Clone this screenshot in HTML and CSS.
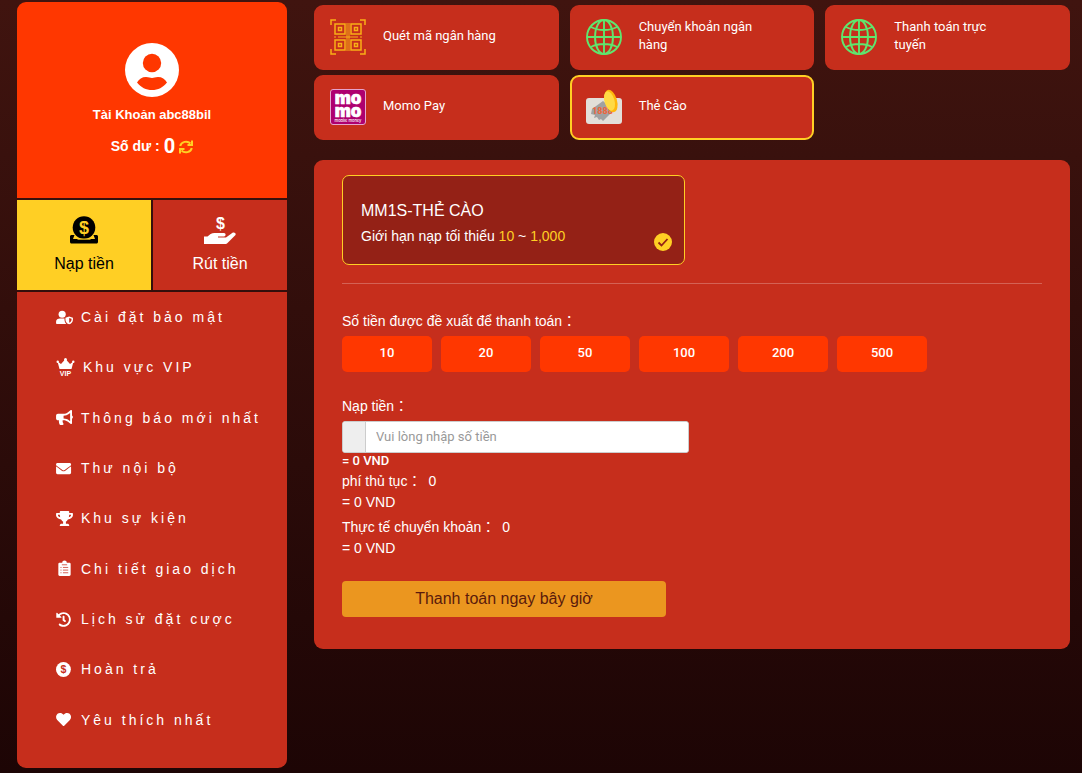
FILE: index.html
```html
<!DOCTYPE html>
<html lang="vi">
<head>
    <meta charset="UTF-8">
    <meta name="viewport" content="width=device-width, initial-scale=1">
    <title>Nạp tiền</title>
    <link rel="stylesheet" href="styles.css">
</head>
<body>
    <div class="page">
        <aside class="sidebar">
            <div class="profile">
                <svg class="avatar" viewBox="0 0 54 54">
                    <circle cx="27" cy="27" r="27" fill="#fff"/>
                    <circle cx="27" cy="20" r="9.200" fill="#ff3700"/>
                    <path d="M12 39.500C14 36 17 34 21 34c3 0 4 1 6 1s3-1 6-1c4 0 7 2 9 5.500C38 44.500 33 47 27 47s-11-2.500-15-7.500z" fill="#ff3700"/>
                </svg>
                <div class="account">Tài Khoản <span>abc88bil</span></div>
                <div class="balance">
                    <span class="balance-label">Số dư :</span>
                    <span class="balance-value">0</span>
                    <button type="button" class="refresh" aria-label="Làm mới">
                        <svg viewBox="0 0 14 14" fill="none" stroke="#ffcf24" stroke-width="2">
                            <path d="M1.200 6A6 5.500 0 0 1 11.500 3.500M12.800 8A6 5.500 0 0 1 2.500 10.500"/>
                            <path d="M13 .5V5H8.500M1 13.500V9h4.500"/>
                        </svg>
                    </button>
                </div>
            </div>
            <div class="tabs">
                <a href="#" class="tab active">
                    <svg viewBox="0 0 28 28">
                        <path d="M1.500 19h3l-1.500 4h22l-1.500-4h3c.8 0 1.500.7 1.500 1.500V26c0 .8-.7 1.500-1.500 1.500h-25C.7 27.500 0 26.800 0 26v-5.500c0-.8.7-1.500 1.500-1.500z"/>
                        <circle cx="14" cy="11.500" r="11.300"/>
                        <path d="M4 20.500l4 2.700h12l4-2.700" fill="none" stroke="#ffcf24"/>
                        <text x="14" y="18" text-anchor="middle" font-size="18" font-weight="700" fill="#ffcf24">$</text>
                    </svg>
                    <span>Nạp tiền</span>
                </a>
                <a href="#" class="tab">
                    <svg class="hand" viewBox="0 0 32 28" fill="#fff">
                        <text x="16.500" y="12.500" text-anchor="middle" font-size="16" font-weight="700">$</text>
                        <path d="M0 20.500h3.500C5.500 18.800 7.500 17 10.500 17H20c2 0 2.300 3 0 3.500h-6v1h8l6.500-4.700c1.500-1 4 .5 3 2.200L23.500 27c-.7.600-1.200 1-2.200 1H0z"/>
                    </svg>
                    <span>Rút tiền</span>
                </a>
            </div>
            <ul class="menu">
                <li><a href="#">
                    <svg viewBox="0 0 18 16">
                        <circle cx="6.500" cy="4.500" r="3.800"/>
                        <path d="M0 14.500v-2C0 10 2 9 4 9h5v1.500c0 2 1 3.500 2 4.500H1c-.6 0-1-.2-1-.5z"/>
                        <path d="M14 6.800l4 1.500v2c0 2.200-1.500 4.200-4 5-2.500-.8-4-2.800-4-5v-2zm0 1.700v5c1.500-.6 2.500-2 2.500-3.200v-.9z" fill-rule="evenodd"/>
                    </svg>
                    Cài đặt bảo mật</a></li>
                <li><a href="#">
                    <svg class="crown" viewBox="0 0 18 18">
                        <path d="M1 3.500l3.500 2.600L9 1l4.500 5.100L17 3.500 15 11H3z"/>
                        <circle cx="9" cy="1.500" r="1.500"/><circle cx="1.200" cy="3.700" r="1.200"/><circle cx="16.800" cy="3.700" r="1.200"/>
                        <text x="9" y="17.800" text-anchor="middle" font-size="7" font-weight="700">VIP</text>
                    </svg>
                    Khu vực VIP</a></li>
                <li><a href="#">
                    <svg viewBox="0 0 576 512"><path d="M576 240c0-23.630-12.950-44.040-32-55.120V32.010C544 23.260 537.020 0 512 0c-7.120 0-14.190 2.380-19.980 7.020l-85.030 68.030C364.280 109.190 310.660 128 256 128H64c-35.350 0-64 28.650-64 64v96c0 35.350 28.650 64 64 64h33.700c-1.390 10.480-2.180 21.140-2.180 32 0 39.770 9.260 77.350 25.560 110.940 5.190 10.690 16.520 17.060 28.400 17.060h74.280c26.050 0 41.690-29.840 25.900-50.560-16.400-21.520-26.150-48.360-26.150-77.440 0-11.110 1.620-21.790 4.410-32H256c54.660 0 108.280 18.810 150.980 52.950l85.030 68.030a32.023 32.023 0 0 0 19.980 7.020c24.920 0 32-22.780 32-32V295.130C563.050 284.040 576 263.630 576 240zm-96 141.420l-33.050-26.440C392.950 311.780 325.120 288 256 288v-96c69.120 0 136.950-23.780 190.950-66.980L480 98.580v282.840z"/></svg>
                    Thông báo mới nhất</a></li>
                <li><a href="#">
                    <svg viewBox="0 0 576 512"><path d="M502.300 190.800c3.900-3.100 9.700-.2 9.700 4.700V400c0 26.500-21.500 48-48 48H48c-26.500 0-48-21.500-48-48V195.600c0-5 5.700-7.800 9.700-4.700 22.400 17.400 52.100 39.500 154.100 113.600 21.100 15.400 56.700 47.800 92.200 47.600 35.700.3 72-32.800 92.300-47.600 102-74.100 131.600-96.300 154-113.700zM256 320c23.200.4 56.600-29.200 73.400-41.400 132.700-96.300 142.800-104.700 173.400-128.700 5.800-4.500 9.200-11.500 9.200-18.900v-19c0-26.500-21.500-48-48-48H48c-26.500 0-48 21.500-48 48v19c0 7.400 3.400 14.300 9.200 18.900 30.600 23.900 40.700 32.400 173.400 128.700 16.800 12.200 50.200 41.800 73.400 41.400z"/></svg>
                    Thư nội bộ</a></li>
                <li><a href="#">
                    <svg viewBox="0 0 576 512"><path d="M552 64H448V24c0-13.300-10.700-24-24-24H152c-13.300 0-24 10.700-24 24v40H24C10.700 64 0 74.700 0 88v56c0 35.700 22.500 72.400 61.900 100.700 31.500 22.700 69.800 37.100 110 41.700C203.300 338.500 240 360 240 360v72h-48c-35.300 0-64 20.700-64 56v12c0 6.600 5.400 12 12 12h296c6.600 0 12-5.400 12-12v-12c0-35.300-28.700-56-64-56h-48v-72s36.700-21.500 68.100-73.600c40.300-4.600 78.600-19 110-41.700 39.300-28.300 61.900-65 61.900-100.700V88c0-13.300-10.700-24-24-24zM99.300 192.800C74.900 175.200 64 155.600 64 144v-16h64.200c1 32.600 5.800 61.200 12.800 86.200-15.100-5.200-29.200-12.400-41.700-21.400zM512 144c0 16.100-17.700 36.100-35.300 48.800-12.500 9-26.700 16.200-41.800 21.400 7-25 11.800-53.600 12.800-86.200H512v16z"/></svg>
                    Khu sự kiện</a></li>
                <li><a href="#">
                    <svg viewBox="0 0 16 14">
                        <path d="M3.500 1.700h2.300a2.200 2.200 0 0 1 4.400 0h2.300c.8 0 1.300.5 1.300 1.300v9.700c0 .8-.5 1.300-1.300 1.300h-9c-.8 0-1.300-.5-1.300-1.300V3c0-.8.500-1.300 1.300-1.300z"/>
                        <path d="M4.200 6h1M6.500 6h5M4.200 8.500h1M6.500 8.500h5M4.200 11h1M6.500 11h5M5.500 3.500h5" stroke="#c62e1c" stroke-width=".7"/>
                    </svg>
                    Chi tiết giao dịch</a></li>
                <li><a href="#">
                    <svg viewBox="0 0 576 512"><path d="M504 255.531c.253 136.640-111.180 248.372-247.820 248.468-59.015.042-113.223-20.530-155.822-54.911-11.077-8.940-11.905-25.541-1.839-35.607l11.267-11.267c8.609-8.609 22.353-9.551 31.891-1.984C173.062 425.135 212.781 440 256 440c101.705 0 184-82.311 184-184 0-101.705-82.311-184-184-184-48.814 0-93.149 18.969-126.068 49.932l50.754 50.754c10.080 10.080 2.941 27.314-11.313 27.314H24c-8.837 0-16-7.163-16-16V38.627c0-14.254 17.234-21.393 27.314-11.314l49.372 49.372C129.209 34.136 189.552 8 256 8c136.810 0 247.747 110.780 248 247.531zm-180.912 78.784l9.823-12.630c8.138-10.463 6.253-25.542-4.210-33.679L288 256.349V152c0-13.255-10.745-24-24-24h-16c-13.255 0-24 10.745-24 24v135.651l65.409 50.874c10.463 8.137 25.541 6.253 33.679-4.210z"/></svg>
                    Lịch sử đặt cược</a></li>
                <li><a href="#">
                    <svg viewBox="0 0 16 14">
                        <circle cx="7" cy="7" r="7"/>
                        <text x="7" y="10.500" text-anchor="middle" font-size="10" font-weight="700" fill="#c62e1c">$</text>
                    </svg>
                    Hoàn trả</a></li>
                <li><a href="#">
                    <svg viewBox="0 0 576 512"><path d="M462.300 62.600C407.500 15.900 326 24.300 275.700 76.200L256 96.500l-19.700-20.300C186.100 24.300 104.500 15.900 49.700 62.600c-62.800 53.600-66.100 149.800-9.900 207.900l193.500 199.800c12.500 12.900 32.800 12.900 45.300 0l193.500-199.800c56.300-58.100 53-154.300-9.800-207.900z"/></svg>
                    Yêu thích nhất</a></li>
            </ul>
        </aside>

        <main class="content">
            <div class="methods">
                <button type="button" class="method">
                    <svg viewBox="0 0 36 36" fill="none" stroke="#f9b016" stroke-width="1.500">
                        <path d="M1 6V1h5M30 1h5v5M35 30v5h-5M6 35H1v-5"/>
                        <path d="M5 5h10v10H5zM21 5h10v10H21zM5 21h10v10H5zM21 21h10v10H21z"/>
                        <path d="M8.500 8.500h3v3h-3zM24.500 8.500h3v3h-3zM8.500 24.500h3v3h-3zM24.500 24.500h3v3h-3z"/>
                        <path d="M17 4v28M19 4v28M4 18h2M8 18h20M30 18h2" stroke-width="1"/>
                    </svg>
                    <span>Quét mã ngân hàng</span>
                </button>
                <button type="button" class="method">
                    <svg viewBox="0 0 36 36" fill="none" stroke="#5fe66e" stroke-width="1.900">
                        <circle cx="18" cy="18" r="17"/>
                        <ellipse cx="18" cy="18" rx="9" ry="17"/>
                        <path d="M18 1v34M1 18h34M5 8c7 4 19 4 26 0M5 28c7-4 19-4 26 0"/>
                    </svg>
                    <span>Chuyển khoản ngân hàng</span>
                </button>
                <button type="button" class="method">
                    <svg viewBox="0 0 36 36" fill="none" stroke="#5fe66e" stroke-width="1.900">
                        <circle cx="18" cy="18" r="17"/>
                        <ellipse cx="18" cy="18" rx="9" ry="17"/>
                        <path d="M18 1v34M1 18h34M5 8c7 4 19 4 26 0M5 28c7-4 19-4 26 0"/>
                    </svg>
                    <span>Thanh toán trực tuyến</span>
                </button>
                <button type="button" class="method">
                    <svg class="momo" viewBox="0 0 36 36" fill="#fff">
                        <rect x=".5" y=".5" width="35" height="35" rx="2.500" fill="#ae006f" stroke="#e5a3cc"/>
                        <text x="18" y="15" text-anchor="middle" font-size="17" stroke="#fff" stroke-width=".6">mo</text>
                        <text x="18" y="28" text-anchor="middle" font-size="17" stroke="#fff" stroke-width=".6">mo</text>
                        <text class="momo-sub" x="18" y="32.700" text-anchor="middle" font-size="4">mobile money</text>
                    </svg>
                    <span>Momo Pay</span>
                </button>
                <button type="button" class="method selected">
                    <svg viewBox="0 0 36 36">
                        <rect x="0" y="9" width="36" height="26" rx="3" fill="#e3dfd9"/>
                        <path d="M6 20l11-8 11 9-11 11-2-2-2 1-2-3-3 1 1-3-4-1z" fill="#a1a1a1"/>
                        <text x="16.500" y="25" text-anchor="middle" font-size="9" font-weight="700" fill="#f0643a">1888</text>
                        <ellipse cx="25" cy="12" rx="6" ry="11.500" transform="rotate(-16 25 12)" fill="#ffb70c"/>
                        <ellipse cx="23.500" cy="12" rx="5" ry="10" transform="rotate(-16 23.500 12)" fill="#ffda45"/>
                    </svg>
                    <span>Thẻ Cào</span>
                </button>
            </div>

            <form class="panel">
                <button type="button" class="channel">
                    <span class="channel-name">MM1S-THẺ CÀO</span>
                    <span class="channel-limit">Giới hạn nạp tối thiểu <b>10</b> ~ <b>1,000</b></span>
                    <svg class="check" viewBox="0 0 18 18">
                        <circle cx="9" cy="9" r="9" fill="#ffcf24"/>
                        <path d="M4.500 9.500l3 3 6-6.500" fill="none" stroke="#942116" stroke-width="1.800"/>
                    </svg>
                </button>
                <hr>
                <p class="label">Số tiền được đề xuất để thanh toán：</p>
                <div class="amounts">
                    <button type="button">10</button>
                    <button type="button">20</button>
                    <button type="button">50</button>
                    <button type="button">100</button>
                    <button type="button">200</button>
                    <button type="button">500</button>
                </div>
                <label class="label" for="amount">Nạp tiền：</label>
                <div class="input-group">
                    <span class="addon"></span>
                    <input type="text" id="amount" name="amount" placeholder="Vui lòng nhập số tiền">
                </div>
                <div class="converted">= 0 VND</div>
                <div class="line">phí thủ tục：<span class="value">0</span></div>
                <div class="line">= 0 VND</div>
                <div class="line total">Thực tế chuyển khoản：<span class="value">0</span></div>
                <div class="line">= 0 VND</div>
                <button type="submit" class="submit">Thanh toán ngay bây giờ</button>
            </form>
        </main>
    </div>
</body>
</html>
```
FILE: styles.css
```css
* {
    box-sizing: border-box;
}
body {
    margin: 0;
    min-height: 100vh;
    background: linear-gradient(#40140f, #1d0505);
    color: #fff;
    font-family: "Liberation Sans", Arial, "Noto Sans CJK TC", sans-serif;
    font-size: 14px;
}
button {
    border: none;
    padding: 0;
    color: inherit;
    font-family: inherit;
    cursor: pointer;
}
a {
    color: inherit;
    text-decoration: none;
}
svg {
    display: block;
    flex-shrink: 0;
    overflow: visible;
}
.page {
    display: flex;
    align-items: flex-start;
    gap: 27px;
    padding: 2px 12px 5px 17px;
}

/* sidebar */
.sidebar {
    display: flex;
    flex-direction: column;
    flex-shrink: 0;
    gap: 2px;
    width: 270px;
    border-radius: 9px;
    overflow: hidden;
}
.profile {
    display: flex;
    flex-direction: column;
    align-items: center;
    padding: 41px 0 39px;
    background: #ff3700;
    font-weight: bold;
}
.avatar {
    width: 54px;
    height: 54px;
}
.account {
    margin-top: 8px;
    font-size: 13px;
    line-height: 20px;
}
.balance {
    display: flex;
    align-items: center;
    gap: 4px;
    margin-top: 9px;
    line-height: 25px;
}
.balance-value {
    font-family: Roboto, sans-serif;
    font-size: 20px;
}
.refresh {
    background: none;
}
.refresh svg {
    width: 14px;
    height: 14px;
}
.tabs {
    display: grid;
    grid-template-columns: 1fr 1fr;
    gap: 2px;
}
.tab {
    display: flex;
    flex-direction: column;
    align-items: center;
    gap: 10px;
    height: 90px;
    padding-top: 16px;
    background: #c62e1c;
    font-size: 16px;
    line-height: 20px;
}
.tab svg {
    width: 28px;
    height: 28px;
}
.tab .hand {
    width: 32px;
}
.tab.active {
    background: #ffcf24;
    color: #000;
}
.menu {
    display: grid;
    grid-auto-rows: 1fr;
    min-height: 476px;
    margin: 0;
    padding: 0 0 23px 39px;
    list-style: none;
    background: #c62e1c;
}
.menu a {
    display: flex;
    align-items: center;
    gap: 8px;
    height: 100%;
    letter-spacing: 3px;
}
.menu svg {
    width: 17px;
    height: 15px;
    fill: #fff;
    letter-spacing: 0;
}
.menu .crown {
    width: 19px;
    height: 18px;
}

/* payment methods */
.content {
    flex: 1;
    min-width: 0;
    padding-top: 3px;
}
.methods {
    display: grid;
    grid-template-columns: repeat(3, 1fr);
    gap: 5px 11px;
}
.method {
    display: flex;
    align-items: center;
    gap: 17px;
    min-height: 65px;
    padding: 0 54px 1px 14px;
    border: 2px solid #c62e1c;
    border-radius: 9px;
    background: #c62e1c;
    font-family: Roboto, sans-serif;
    font-size: 13px;
    line-height: 18px;
    text-align: left;
}
.method svg {
    width: 36px;
    height: 36px;
}
.method span {
    padding-bottom: 3px;
}
.method.selected {
    border-color: #ffcf24;
}
.momo text {
    font-family: Inter, sans-serif;
    font-weight: 900;
}
.momo .momo-sub {
    font-weight: 500;
}

/* deposit form */
.panel {
    margin-top: 20px;
    padding: 15px 28px 32px;
    border-radius: 9px;
    background: #c62e1c;
}
.channel {
    position: relative;
    display: flex;
    flex-direction: column;
    gap: 5px;
    width: 343px;
    height: 90px;
    padding: 25px 18px 0;
    border: 1px solid #ffcf24;
    border-radius: 7px;
    background: #942116;
    line-height: 20px;
    text-align: left;
}
.channel-name {
    font-size: 16px;
}
.channel-limit {
    font-size: 14px;
}
.channel b {
    color: #ffcf24;
    font-weight: normal;
}
.check {
    position: absolute;
    right: 12px;
    bottom: 13px;
    width: 18px;
    height: 18px;
}
hr {
    margin: 18px 0 27px;
    border: none;
    border-top: 1px solid rgba(255, 255, 255, 0.25);
}
.label {
    display: block;
    margin: 0 0 5px;
    line-height: 20px;
}
.amounts {
    display: flex;
    flex-wrap: wrap;
    gap: 9px;
    margin-bottom: 24px;
}
.amounts button {
    width: 90px;
    height: 36px;
    padding-bottom: 3px;
    border-radius: 5px;
    background: #ff3700;
    font-family: Roboto, sans-serif;
    font-size: 13px;
    font-weight: 500;
}
.input-group {
    display: flex;
    width: 347px;
    height: 32px;
    border: 1px solid #ccc;
    border-radius: 3px;
    background: #fff;
    overflow: hidden;
}
.addon {
    width: 23px;
    border-right: 1px solid #ccc;
    background: #eee;
}
.input-group input {
    flex: 1;
    min-width: 0;
    padding: 0 10px 2px;
    border: none;
    outline: none;
    font-family: Roboto, sans-serif;
    font-size: 13px;
}
.input-group input::placeholder {
    color: #999;
}
.converted {
    font-family: Roboto, sans-serif;
    font-size: 13px;
    font-weight: 500;
    line-height: 16px;
}
.line {
    line-height: 21px;
}
.converted + .line {
    margin-top: 2px;
}
.value {
    margin-left: 7px;
}
.total {
    margin-top: 4px;
}
.submit {
    display: block;
    width: 324px;
    height: 36px;
    margin-top: 22px;
    border-radius: 4px;
    background: #eb961f;
    color: #5a1a0c;
    font-size: 16px;
}
```
